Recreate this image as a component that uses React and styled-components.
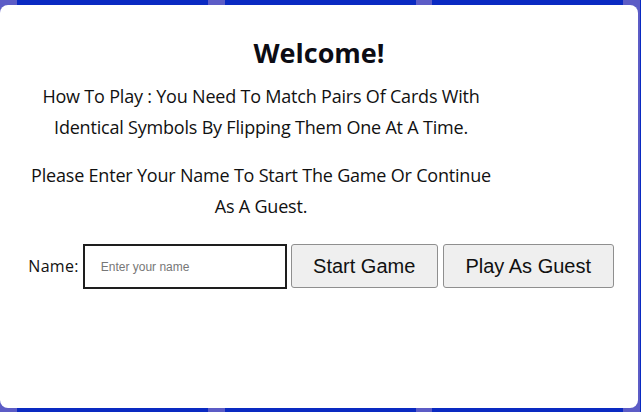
import styled, { createGlobalStyle } from "styled-components";

const GlobalStyle = createGlobalStyle`
  html, body {
    margin: 0;
    padding: 0;
    overflow: hidden;
  }
  body {
    font-family: "Open Sans", "Liberation Sans", sans-serif;
  }
`

const Board = styled.div`
  display: grid;
  grid-template-columns: repeat(4, 191.3px);
  gap: 16.3px;
  padding: 0 0 0 17px;
  height: 412px;
  box-sizing: border-box;
  overflow: hidden;
  background: #5c5cc6;
`
const Card = styled.div`
  background: #0a2ac2;
`
const Overlay = styled.div`
  position: fixed;
  inset: 0;
  padding: 5px 3px 4px 0;
  box-sizing: border-box;
  display: flex;
`
const Modal = styled.div`
  flex: 1;
  background: #fff;
  border-radius: 8px;
  display: flex;
  flex-direction: column;
  align-items: center;
  padding-top: 30px;
  box-sizing: border-box;
  text-align: center;
`
const Title = styled.h2`
  margin: 0;
  font-family: "Open Sans", sans-serif;
  font-size: 27px;
  font-weight: 700;
  color: #0c0c14;
  line-height: 36px;
`
const Text = styled.p`
  align-self: flex-start;
  width: 470px;
  margin: ${({$top}) => $top}px 0 0 26px;
  font-family: "Open Sans", "Liberation Sans", sans-serif;
  font-size: 18px;
  line-height: 31px;
  letter-spacing: -0.2px;
  color: #111;
`
const Form = styled.div`
  display: flex;
  align-items: center;
  margin-top: 22px;
  margin-left: 4px;
`
const Label = styled.label`
  font-family: "Open Sans", "Liberation Sans", sans-serif;
  font-size: 16px;
  letter-spacing: 0.3px;
  color: #111;
  margin-right: 4px;
  margin-top: -2px;
`
const Input = styled.input`
  width: 204px;
  height: 45px;
  box-sizing: border-box;
  border: 2px solid #1e1e1e;
  padding: 0 16px;
  font-family: "Liberation Sans", Arial, sans-serif;
  font-size: 12px;
  outline: none;
  &::placeholder {
    color: #777;
  }
`
const Button = styled.button`
  height: 44px;
  width: ${({$w}) => $w}px;
  margin-left: ${({$gap}) => $gap}px;
  margin-top: -1px;
  background: #efefef;
  border: 1px solid #8f8f8f;
  border-radius: 3px;
  font-family: "Liberation Sans", Arial, sans-serif;
  font-size: 20px;
  color: #111;
  padding: 0;
`

export default function App() {
  return (
    <>
      <GlobalStyle />
      <Board>
        <Card />
        <Card />
        <Card />
        <Card />
      </Board>
      <Overlay>
        <Modal>
          <Title>Welcome!</Title>
          <Text $top={10}>How To Play : You Need To Match Pairs Of Cards With Identical Symbols By Flipping Them One At A Time.</Text>
          <Text $top={17}>Please Enter Your Name To Start The Game Or Continue As A Guest.</Text>
          <Form>
            <Label>Name:</Label>
            <Input placeholder="Enter your name" />
            <Button $w={147} $gap={4}>Start Game</Button>
            <Button $w={171} $gap={5}>Play As Guest</Button>
          </Form>
        </Modal>
      </Overlay>
    </>
  )
}
